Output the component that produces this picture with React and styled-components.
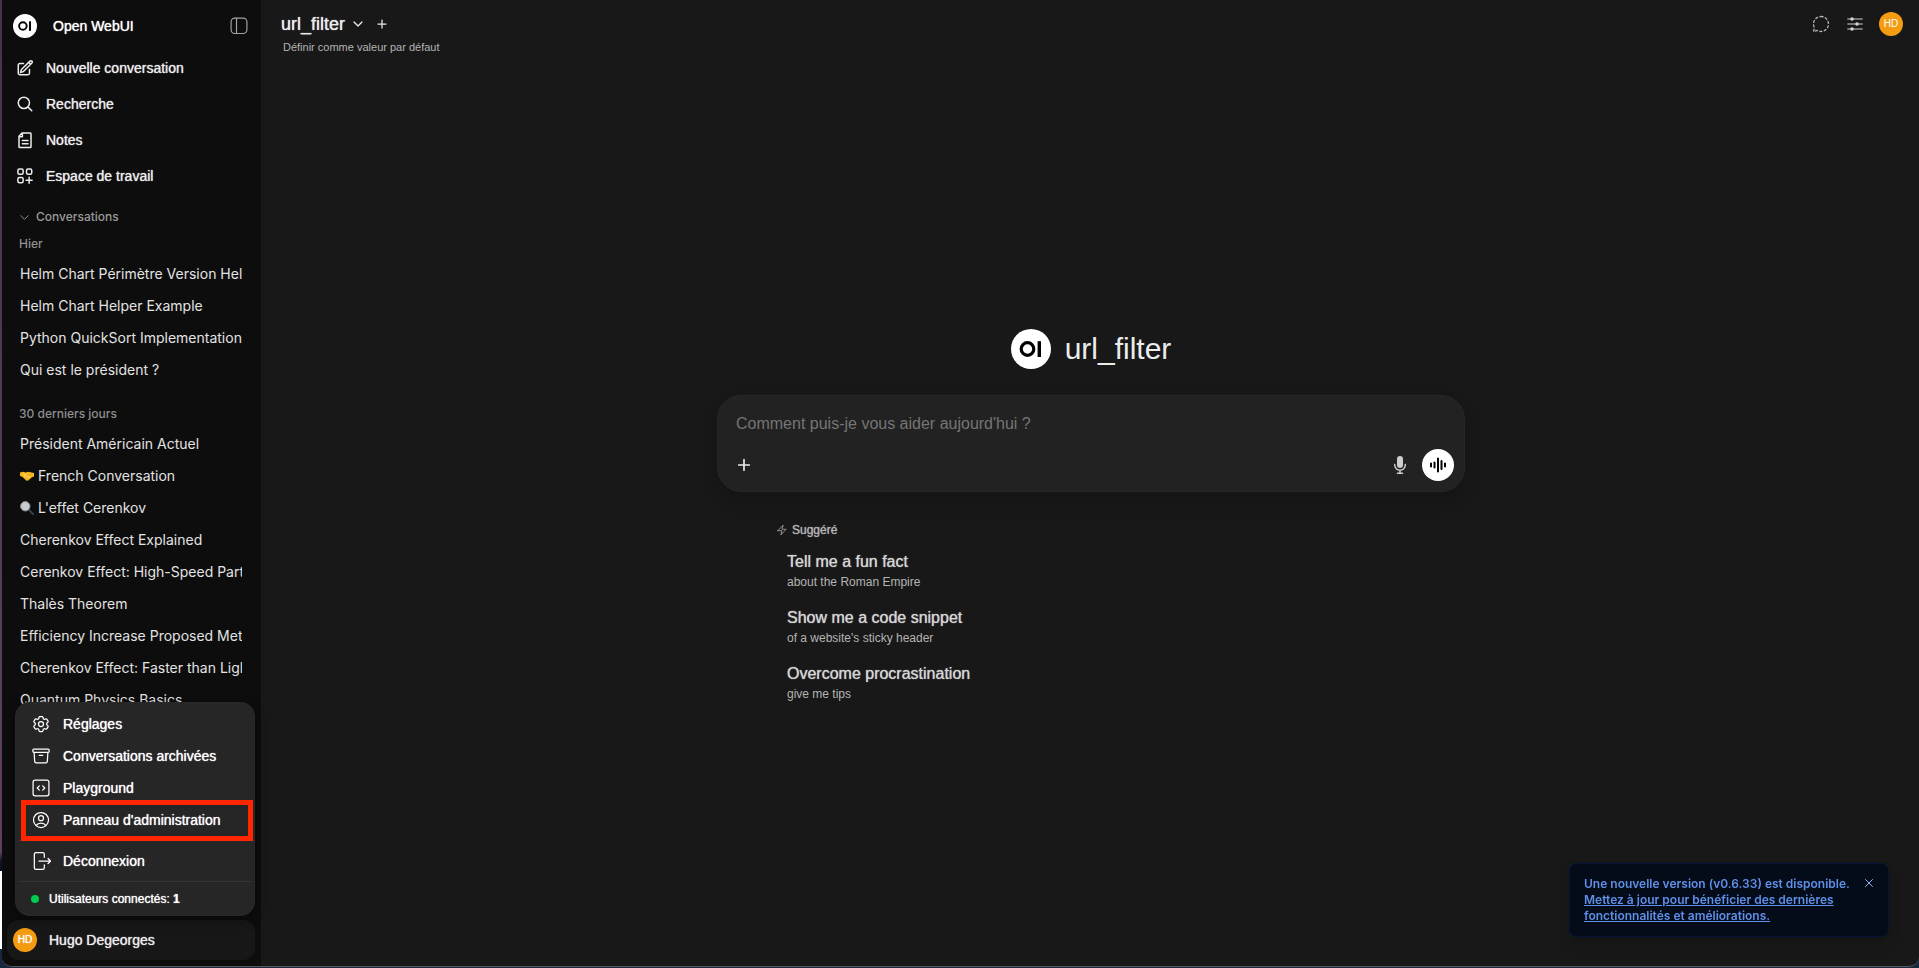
import { useState } from 'react'
import styled, { createGlobalStyle, css } from 'styled-components'
import {
  HiOutlineArchiveBox,
  HiOutlineBolt,
  HiOutlineCog6Tooth,
  HiOutlineMagnifyingGlass,
  HiOutlinePencilSquare,
  HiOutlineUserCircle,
} from 'react-icons/hi2'

const ui = '"Liberation Sans", Arial, sans-serif'
const system = 'Inter, "Noto Sans", sans-serif'

// the ui font has no medium weight
const medium = css`
  text-shadow: 0 0 1px currentColor;
`

const GlobalStyle = createGlobalStyle`
  *, *::before, *::after {
    box-sizing: border-box;
  }
  body {
    margin: 0;
    background: #181818;
    font-family: ${ui};
    font-size: 14px;
    line-height: 20px;
    color: #ececec;
  }
  button, textarea {
    font: inherit;
    color: inherit;
    background: none;
    border: 0;
    padding: 0;
    margin: 0;
  }
  button {
    cursor: pointer;
  }
  a {
    color: inherit;
    text-decoration: none;
  }
  ul, h1, h2, p {
    margin: 0;
    padding: 0;
    list-style: none;
    font-weight: 400;
  }
  svg {
    display: block;
    flex-shrink: 0;
  }
`

const Desktop = styled.div`
  height: 100vh;
  padding: 0 0 1px 2px;
  background: linear-gradient(
    #49324d 0,
    #5f3f60 88%,
    #0b1420 89%,
    #0b1420 90%,
    #ffffff 90%,
    #ffffff 98%,
    #16293f 98%
  );
`

const Window = styled.div`
  display: flex;
  height: 100%;
  overflow: hidden;
  background: #181818;
  border-bottom: 1px solid #5a5a5a;
  border-radius: 0 0 10px 10px;
`

const Sidebar = styled.aside`
  position: relative;
  display: flex;
  flex-direction: column;
  flex: 0 0 259px;
  min-width: 0;
  background: #0d0d0d;
`

const SidebarHeader = styled.header`
  display: flex;
  align-items: center;
  height: 50px;
  padding: 2px 12px 0 11px;
`

const Brand = styled.a`
  display: flex;
  flex: 1;
  align-items: center;
  gap: 16px;
  color: #fff;
  ${medium}
`

const IconButton = styled.button`
  display: flex;
  color: ${props => props.$color || '#ececec'};
`

const Nav = styled.nav`
  display: flex;
  flex-direction: column;
`

const NavLink = styled.a`
  display: flex;
  align-items: center;
  gap: 12px;
  height: 36px;
  padding-left: 14px;
  ${medium}
`

const History = styled.section`
  flex: 1;
  min-height: 0;
  overflow: hidden;
  padding: 10px 19px 0 17px;
  font-family: ${system};
`

const Folder = styled.button`
  display: flex;
  align-items: center;
  gap: 6px;
  height: 26px;
  font-size: 12px;
  font-weight: 500;
  color: #9b9b9b;
`

const Period = styled.h2`
  padding: ${props => (props.$first ? '6px' : '20px')} 0 6px;
  font-size: 12px;
  line-height: 16px;
  font-weight: 500;
  color: #8f8f8f;
`

const Chat = styled.a`
  display: flex;
  align-items: center;
  gap: 4px;
  height: 32px;
  margin-left: 1px;
  overflow: hidden;
  white-space: nowrap;
  color: #e3e3e3;
`

const Footer = styled.footer`
  padding: 4px 6px 6px 5px;
`

const UserButton = styled.button`
  display: flex;
  align-items: center;
  gap: 12px;
  width: 100%;
  height: 40px;
  padding-left: 6px;
  border-radius: 12px;
  background: #171717;
  ${medium}
`

const Avatar = styled.span`
  display: flex;
  align-items: center;
  justify-content: center;
  width: 24px;
  height: 24px;
  border-radius: 50%;
  background: #f39c12;
  color: #fff;
  font-size: 10px;
  line-height: 12px;
`

const Menu = styled.div`
  position: absolute;
  left: 13px;
  right: 6px;
  bottom: 50px;
  padding: 5px 3px 3px;
  border: 1px solid #292929;
  border-radius: 14px;
  background: #262626;
  box-shadow: 0 4px 12px rgba(0, 0, 0, 0.4);
  color: #fff;
  ${medium}
`

const MenuItem = styled.a`
  position: relative;
  display: flex;
  align-items: center;
  gap: 12px;
  height: 32px;
  padding-left: 12px;
`

const HighlightedItem = styled(MenuItem)`
  &::after {
    content: '';
    position: absolute;
    inset: -4px -2px -5px 2px;
    border: 5px solid #ff2600;
    z-index: 1;
  }
`

const Divider = styled.hr`
  height: 1px;
  margin: 4px 0;
  border: 0;
  background: #363636;
`

const Online = styled.p`
  display: flex;
  align-items: center;
  height: 26px;
  padding-left: 12px;
  font-size: 12px;
  white-space: pre;

  &::before {
    content: '';
    width: 8px;
    height: 8px;
    margin-right: 10px;
    border-radius: 50%;
    background: #00c950;
  }
`

const Main = styled.main`
  display: flex;
  flex-direction: column;
  flex: 1;
  min-width: 0;
`

const TopBar = styled.header`
  display: flex;
  justify-content: space-between;
  height: 60px;
  padding: 12px 16px 0 20px;
`

const ModelPicker = styled.div`
  display: flex;
  align-items: center;
  gap: 12px;
  height: 24px;
`

const ModelButton = styled.button`
  display: flex;
  align-items: center;
  gap: 7px;
  font-size: 18px;
  line-height: 24px;
  ${medium}
`

const DefaultButton = styled.button`
  padding: 3px 2px;
  font-size: 11px;
  line-height: 16px;
  color: #b4b4b4;
`

const Actions = styled.div`
  display: flex;
  align-items: center;
  gap: 16px;
  height: 24px;
`

const Welcome = styled.div`
  display: flex;
  flex-direction: column;
  align-items: center;
  justify-content: center;
  flex: 1;
  padding: 12px 24px 0 26px;
`

const ModelHeading = styled.h1`
  display: flex;
  align-items: center;
  gap: 14px;
  height: 40px;
  font-size: 30px;
  line-height: 36px;
`

const Composer = styled.form`
  display: flex;
  flex-direction: column;
  gap: 12px;
  width: 100%;
  max-width: 748px;
  margin-top: 26px;
  padding: 15px 10px 10px 18px;
  border: 1px solid #272727;
  border-radius: 24px;
  background: #222222;
  box-shadow: 0 8px 16px rgba(0, 0, 0, 0.15);
`

const Prompt = styled.textarea`
  display: block;
  width: 100%;
  height: 26px;
  font-size: 16px;
  line-height: 26px;
  resize: none;
  overflow: hidden;
  outline: none;

  &::placeholder {
    color: #757575;
    opacity: 1;
  }
`

const ComposerTools = styled.div`
  display: flex;
  align-items: center;
  gap: 12px;
  height: 32px;
`

const Spacer = styled.span`
  flex: 1;
`

const VoiceButton = styled.button`
  display: flex;
  align-items: center;
  justify-content: center;
  width: 32px;
  height: 32px;
  border-radius: 50%;
  background: #fff;
  color: #000;
`

const Suggestions = styled.section`
  width: 100%;
  max-width: 630px;
  margin-top: 30px;
`

const SuggestedLabel = styled.h2`
  display: flex;
  align-items: center;
  gap: 4px;
  margin-bottom: 4px;
  font-size: 12px;
  line-height: 16px;
  color: #b4b4b4;
  ${medium}
`

const Suggestion = styled.button`
  display: flex;
  flex-direction: column;
  justify-content: center;
  width: 100%;
  height: 56px;
  padding-left: 11px;
  text-align: left;
  font-size: 12px;
  line-height: 16px;
  color: #b4b4b4;
`

const SuggestionTitle = styled.span`
  font-size: 16px;
  line-height: 24px;
  color: #d4d4d4;
  ${medium}
`

const Toast = styled.div`
  position: fixed;
  right: 30px;
  bottom: 31px;
  display: flex;
  align-items: flex-start;
  justify-content: space-between;
  width: 320px;
  padding: 12px 13px 12px 14px;
  border: 1px solid #051239;
  border-radius: 8px;
  background: #040b19;
  box-shadow: 0 8px 12px rgba(0, 0, 0, 0.15);
  font-family: ${system};
  font-size: 12px;
  line-height: 16px;
  color: #5f90e8;

  p {
    font-weight: 600;
  }

  a {
    text-decoration: underline;
  }
`

const ToastClose = styled.button`
  display: flex;
  padding-top: 1px;
  color: #8db4f5;
`

// Round "OI" mark used in the sidebar and above the composer
const Logo = ({ size }) => (
  <svg width={size} height={size} viewBox="0 0 40 40" aria-hidden="true">
    <circle cx="20" cy="20" r="20" fill="#fff" />
    <circle cx="16.5" cy="20" r="6.3" fill="none" stroke="#000" strokeWidth="3.2" />
    <rect x="26.6" y="12.2" width="3.4" height="15.8" fill="#000" />
  </svg>
)

const Stroke = ({ size = 20, width = 1.5, children }) => (
  <svg
    width={size}
    height={size}
    viewBox="0 0 24 24"
    fill="none"
    stroke="currentColor"
    strokeWidth={width}
    strokeLinecap="round"
    strokeLinejoin="round"
    aria-hidden="true"
  >
    {children}
  </svg>
)

const PanelIcon = () => (
  <Stroke size={20} width={1.4}>
    <rect x="2.5" y="2.5" width="19" height="18.5" rx="4.5" />
    <path d="M9 2.5v18.5" />
  </Stroke>
)

const NoteIcon = () => (
  <Stroke size={18} width={2}>
    <path d="M4 21V7l4-4.500h11a1 1 0 0 1 1 1V21a1 1 0 0 1-1 1H5a1 1 0 0 1-1-1zM8.500 3v4.500H4M8.500 12.500h7.500M8.500 17h7.500" />
  </Stroke>
)

const WorkspaceIcon = () => (
  <Stroke size={18} width={2}>
    <rect x="2.5" y="2.5" width="7" height="7" rx="2" />
    <rect x="14" y="2.5" width="7" height="7" rx="2" />
    <rect x="2.5" y="14" width="7" height="7" rx="2" />
    <path d="M17.5 13.5v8M13.5 17.5h8" />
  </Stroke>
)

const CodeIcon = () => (
  <Stroke>
    <rect x="2.5" y="2.5" width="19" height="19" rx="2.5" />
    <path d="M10 9.500 7.500 12l2.500 2.500M14 9.500 16.500 12 14 14.500" />
  </Stroke>
)

const LogoutIcon = () => (
  <Stroke>
    <path d="M16 7.500V4a2 2 0 0 0-2-2H6a2 2 0 0 0-2 2v16a2 2 0 0 0 2 2h8a2 2 0 0 0 2-2v-3.500M9.500 12h14M20.500 9l3 3-3 3" />
  </Stroke>
)

const ChevronIcon = ({ size, width }) => (
  <Stroke size={size} width={width}>
    <path d="m4 8 8 8 8-8" />
  </Stroke>
)

const PlusIcon = ({ size, width }) => (
  <Stroke size={size} width={width}>
    <path d="M12 4v16M4 12h16" />
  </Stroke>
)

const TemporaryChatIcon = () => (
  <Stroke size={20} width={1.6}>
    <path
      d="M12 3a9 9 0 1 1-4.500 16.800L3 21l1.200-4.500A9 9 0 0 1 12 3"
      strokeDasharray="2.4 3"
    />
  </Stroke>
)

const ControlsIcon = () => (
  <svg width="16" height="14" viewBox="0 0 16 14" aria-hidden="true">
    <path d="M1 2h14M1 7h14M1 12h14" stroke="#757575" strokeWidth="1.8" strokeLinecap="round" />
    <g fill="#d4d4d4">
      <circle cx="5" cy="2" r="1.8" />
      <circle cx="10" cy="7" r="1.8" />
      <circle cx="5" cy="12" r="1.8" />
    </g>
  </svg>
)

const MicIcon = () => (
  <svg width="20" height="20" viewBox="0 0 20 20" fill="#cdcdcd" aria-hidden="true">
    <rect x="7" y="1" width="6" height="12" rx="3" />
    <path
      d="M4.700 9.500v.5a5.300 5.300 0 0 0 10.600 0v-.5M10 15.300V18M7.500 18.300h5"
      fill="none"
      stroke="#cdcdcd"
      strokeWidth="1.5"
      strokeLinecap="round"
    />
  </svg>
)

const WaveIcon = () => (
  <svg width="18" height="18" viewBox="0 0 18 18" aria-hidden="true">
    <path
      d="M2 7.500v3M5.500 6.500v5M9 2.500v13M12.500 5v8M16 7.500v3"
      stroke="currentColor"
      strokeWidth="2"
      strokeLinecap="round"
    />
  </svg>
)

const HandshakeIcon = () => (
  <svg width="14" height="14" viewBox="0 0 14 14" role="img" aria-label="Poignée de main">
    <path d="M0 3.500 3 2.800l3 .8 2.500-.8L14 4v3.500l-2 .8-3.800 3.200-1.700.2L2.500 8 0 7z" fill="#f5b51e" />
    <path d="m2.500 4.500 3 .5 1.500-.8 4.500 3.300-3.500 2.600L4 7.500z" fill="#ffcf45" />
    <path d="m6 6 1.500.6L9 5.500l2.500 2.300M6.500 8l2 2" fill="none" stroke="#c67c0b" strokeWidth=".6" />
  </svg>
)

const LoupeIcon = () => (
  <svg width="14" height="14" viewBox="0 0 14 14" role="img" aria-label="Loupe">
    <path d="m9 9 4 4" stroke="#34414f" strokeWidth="2" strokeLinecap="round" />
    <circle cx="5.3" cy="5.3" r="4.7" fill="#c9cdd0" stroke="#858e96" />
  </svg>
)

const yesterday = [
  { title: 'Helm Chart Périmètre Version Help' },
  { title: 'Helm Chart Helper Example' },
  { title: 'Python QuickSort Implementation' },
  { title: 'Qui est le président ?' },
]

const lastMonth = [
  { title: 'Président Américain Actuel' },
  { title: 'French Conversation', icon: <HandshakeIcon /> },
  { title: "L'effet Cerenkov", icon: <LoupeIcon /> },
  { title: 'Cherenkov Effect Explained' },
  { title: 'Cerenkov Effect: High-Speed Parti' },
  { title: 'Thalès Theorem' },
  { title: 'Efficiency Increase Proposed Meth' },
  { title: 'Cherenkov Effect: Faster than Ligh' },
  { title: 'Quantum Physics Basics' },
]

const suggestions = [
  ['Tell me a fun fact', 'about the Roman Empire'],
  ['Show me a code snippet', "of a website's sticky header"],
  ['Overcome procrastination', 'give me tips'],
]

const ChatList = ({ chats }) => (
  <ul>
    {chats.map(({ title, icon }) => (
      <li key={title}>
        <Chat href="#chat">
          {icon}
          <span>{title}</span>
        </Chat>
      </li>
    ))}
  </ul>
)

const UserMenu = () => (
  <Menu>
    <MenuItem href="#settings">
      <HiOutlineCog6Tooth size={20} />
      Réglages
    </MenuItem>
    <MenuItem href="#archived">
      <HiOutlineArchiveBox size={20} />
      Conversations archivées
    </MenuItem>
    <MenuItem href="#playground">
      <CodeIcon />
      Playground
    </MenuItem>
    <HighlightedItem href="#admin">
      <HiOutlineUserCircle size={20} />
      Panneau d'administration
    </HighlightedItem>
    <Divider />
    <MenuItem href="#logout">
      <LogoutIcon />
      Déconnexion
    </MenuItem>
    <Divider />
    <Online>
      Utilisateurs connectés: <b>1</b>
    </Online>
  </Menu>
)

function App() {
  const [prompt, setPrompt] = useState('')
  const [menuOpen, setMenuOpen] = useState(true)
  const [toastOpen, setToastOpen] = useState(true)

  return (
    <>
      <GlobalStyle />
      <Desktop>
        <Window>
          <Sidebar>
            <SidebarHeader>
              <Brand href="#home">
                <Logo size={24} />
                Open WebUI
              </Brand>
              <IconButton $color="#a3a3a3" aria-label="Fermer la barre latérale">
                <PanelIcon />
              </IconButton>
            </SidebarHeader>
            <Nav>
              <NavLink href="#new">
                <HiOutlinePencilSquare size={18} strokeWidth={2} />
                Nouvelle conversation
              </NavLink>
              <NavLink href="#search">
                <HiOutlineMagnifyingGlass size={18} strokeWidth={2} />
                Recherche
              </NavLink>
              <NavLink href="#notes">
                <NoteIcon />
                Notes
              </NavLink>
              <NavLink href="#workspace">
                <WorkspaceIcon />
                Espace de travail
              </NavLink>
            </Nav>
            <History>
              <Folder>
                <ChevronIcon size={11} width={2} />
                Conversations
              </Folder>
              <Period $first>Hier</Period>
              <ChatList chats={yesterday} />
              <Period>30 derniers jours</Period>
              <ChatList chats={lastMonth} />
            </History>
            <Footer>
              <UserButton onClick={() => setMenuOpen(open => !open)}>
                <Avatar>HD</Avatar>
                Hugo Degeorges
              </UserButton>
            </Footer>
            {menuOpen && <UserMenu />}
          </Sidebar>
          <Main>
            <TopBar>
              <div>
                <ModelPicker>
                  <ModelButton>
                    url_filter
                    <ChevronIcon size={12} width={2.5} />
                  </ModelButton>
                  <IconButton aria-label="Ajouter un modèle">
                    <PlusIcon size={12} width={2.5} />
                  </IconButton>
                </ModelPicker>
                <DefaultButton>Définir comme valeur par défaut</DefaultButton>
              </div>
              <Actions>
                <IconButton $color="#b4b4b4" aria-label="Conversation temporaire">
                  <TemporaryChatIcon />
                </IconButton>
                <IconButton aria-label="Contrôles">
                  <ControlsIcon />
                </IconButton>
                <IconButton aria-label="Menu utilisateur">
                  <Avatar>HD</Avatar>
                </IconButton>
              </Actions>
            </TopBar>
            <Welcome>
              <ModelHeading>
                <Logo size={40} />
                url_filter
              </ModelHeading>
              <Composer onSubmit={e => e.preventDefault()}>
                <Prompt
                  rows={1}
                  aria-label="Message"
                  placeholder="Comment puis-je vous aider aujourd'hui ?"
                  value={prompt}
                  onChange={e => setPrompt(e.target.value)}
                />
                <ComposerTools>
                  <IconButton type="button" aria-label="Plus">
                    <PlusIcon size={16} width={2.5} />
                  </IconButton>
                  <Spacer />
                  <IconButton type="button" aria-label="Dicter">
                    <MicIcon />
                  </IconButton>
                  <VoiceButton type="button" aria-label="Mode vocal">
                    <WaveIcon />
                  </VoiceButton>
                </ComposerTools>
              </Composer>
              <Suggestions>
                <SuggestedLabel>
                  <HiOutlineBolt size={12} />
                  Suggéré
                </SuggestedLabel>
                {suggestions.map(([title, subtitle]) => (
                  <Suggestion key={title} onClick={() => setPrompt(`${title} ${subtitle}`)}>
                    <SuggestionTitle>{title}</SuggestionTitle>
                    {subtitle}
                  </Suggestion>
                ))}
              </Suggestions>
            </Welcome>
          </Main>
        </Window>
      </Desktop>
      {toastOpen && (
        <Toast role="status">
          <p>
            Une nouvelle version (v0.6.33) est disponible.
            <br />
            <a href="#update">
              Mettez à jour pour bénéficier des dernières
              <br />
              fonctionnalités et améliorations.
            </a>
          </p>
          <ToastClose aria-label="Fermer" onClick={() => setToastOpen(false)}>
            <Stroke size={12} width={2}>
              <path d="m5 5 14 14M19 5 5 19" />
            </Stroke>
          </ToastClose>
        </Toast>
      )}
    </>
  )
}

export default App
